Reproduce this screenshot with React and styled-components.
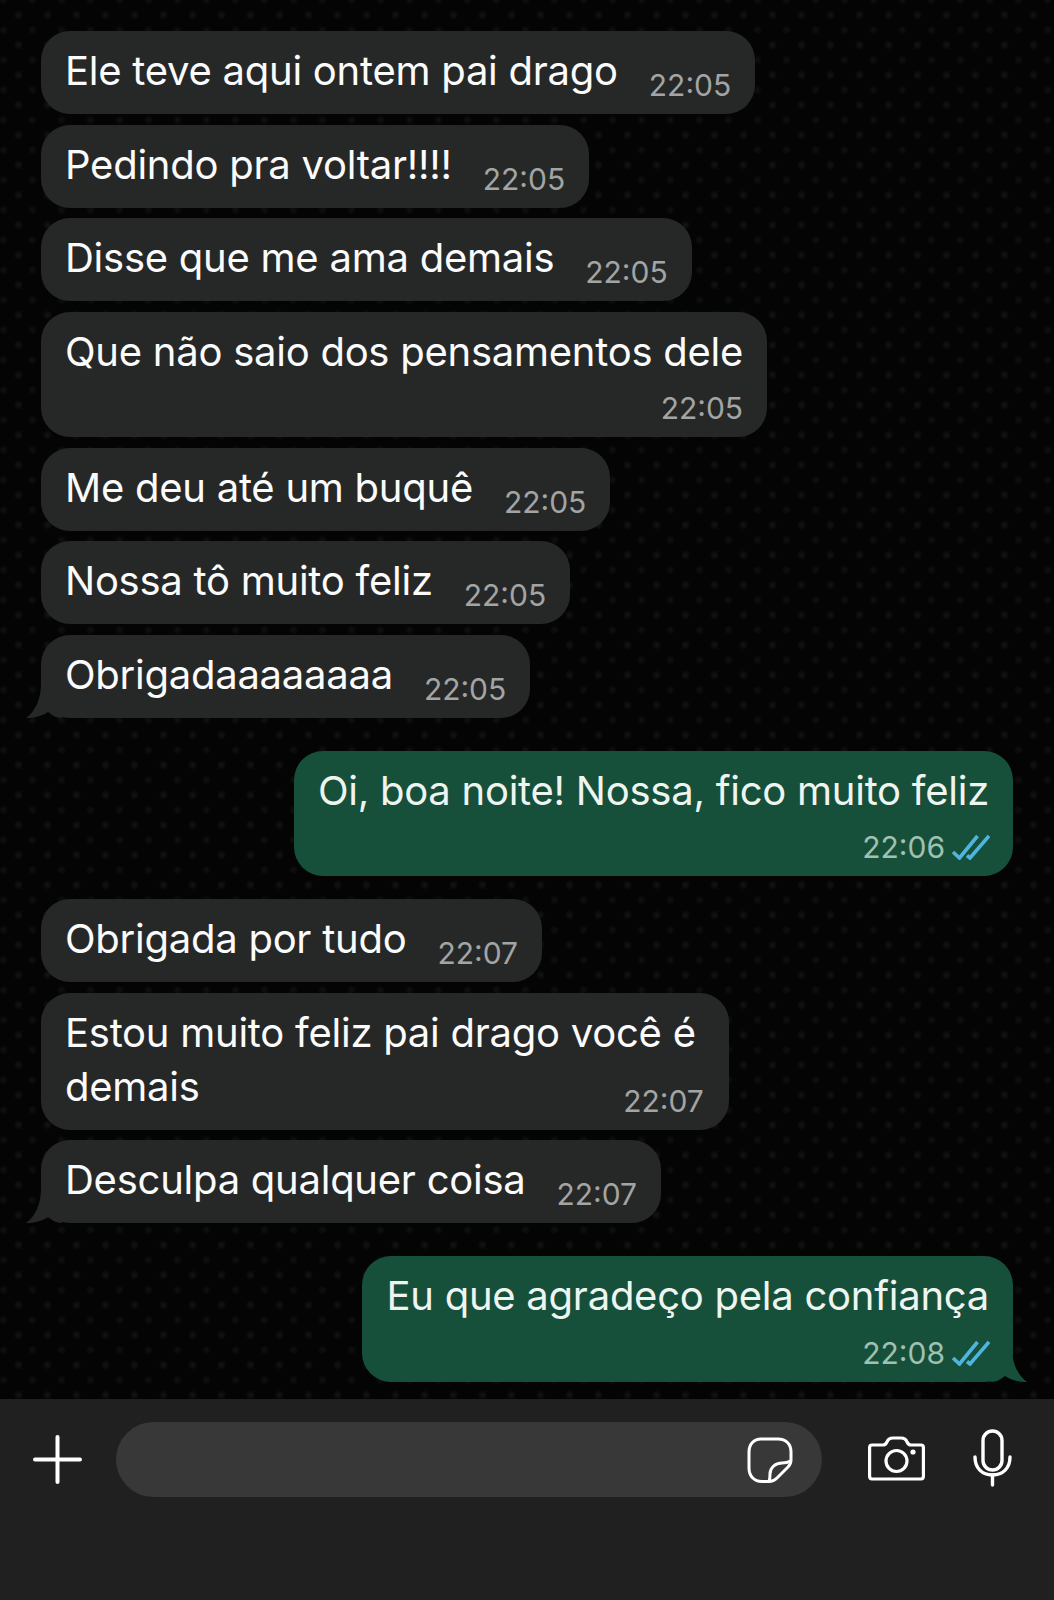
import styled, { createGlobalStyle } from "styled-components";
import React from "react";

const GlobalStyle = createGlobalStyle`
  html, body {
    margin: 0;
    padding: 0;
    background: #050505;
  }
  * {
    box-sizing: border-box;
  }
`;

const Screen = styled.div`
  width: 1054px;
  height: 1600px;
  display: flex;
  flex-direction: column;
  overflow: hidden;
  font-family: Inter, "Liberation Sans", sans-serif;
`;

const Thread = styled.div`
  flex: 1;
  display: flex;
  flex-direction: column;
  padding: 31px 41px 0;
  background-color: #040404;
  background-image:
    radial-gradient(circle, #151515 0, transparent 5px),
    radial-gradient(circle, #111111 0, transparent 5px);
  background-size: 29px 30px, 29px 30px;
  background-position: 4px 0, 18px 15px;
`;

const Group = styled.div`
  display: flex;
  flex-direction: column;
  align-items: ${(p) => (p.$sent ? "flex-end" : "flex-start")};
  gap: 10.5px;
  margin-top: ${(p) => p.$top || 0}px;
`;

const Bubble = styled.div`
  position: relative;
  display: flex;
  flex-direction: ${(p) => (p.$stacked || p.$wrapped ? "column" : "row")};
  align-items: flex-end;
  gap: ${(p) => (p.$wrapped ? 0 : p.$stacked ? 12.5 : 31)}px;
  padding: 13px ${(p) => (p.$wrapped ? 33 : 24)}px 12px 24px;
  border-radius: 29px;
  background: ${(p) => (p.$sent ? "#17503a" : "#262828")};
  color: ${(p) => (p.$sent ? "#eef5f1" : "#fbfbfb")};
`;

const Text = styled.div`
  align-self: flex-start;
  font-size: 40px;
  line-height: 54px;
  letter-spacing: -0.25px;
  white-space: nowrap;
  margin-bottom: ${(p) => (p.$inline ? 4 : 0)}px;
`;

const Meta = styled.div`
  display: flex;
  align-items: center;
  gap: 7px;
  height: 34px;
  margin-top: ${(p) => (p.$wrapped ? -30 : 0)}px;
  margin-right: ${(p) => (p.$wrapped ? -8 : 0)}px;
`;

const Time = styled.span`
  font-size: 30px;
  line-height: 34px;
  white-space: nowrap;
  color: ${(p) => (p.$sent ? "#9fc1b2" : "#a3a4a4")};
`;

const TailSvg = styled.svg`
  position: absolute;
  bottom: 0;
  ${(p) => (p.$sent ? "right: -14px; transform: scaleX(-1);" : "left: -15px;")}
`;

const TickSvg = styled.svg`
  margin-right: -1px;
`;

const InputBar = styled.div`
  height: 201px;
  display: flex;
  align-items: flex-start;
  padding: 23px 42px 0 33px;
  background: #202020;
`;

const IconSlot = styled.div`
  display: flex;
  flex: none;
  margin-left: ${(p) => p.$left || 0}px;
  margin-top: ${(p) => p.$top || 0}px;
`;

const Field = styled.div`
  flex: 1;
  height: 75px;
  margin-left: 34px;
  padding-right: 29px;
  display: flex;
  align-items: center;
  justify-content: flex-end;
  border-radius: 38px;
  background: #383838;
`;

const Tail = ({ sent, color }) => (
  <TailSvg $sent={sent} width="36" height="34" viewBox="0 0 36 34">
    <path
      d="M15 0 C15 15 9 28 0 34 C8 34 16 32 22 28 C26 31 30 34 36 34 L36 0 Z"
      fill={color}
    />
  </TailSvg>
);

const Ticks = () => (
  <TickSvg width="38" height="26" viewBox="0 0 38 26" fill="none" stroke="#4fb5df" strokeWidth="3.6">
    <path d="M1 18 L7.5 24 L25.5 2" />
    <path d="M15 21.5 L18 24 L37 2" />
  </TickSvg>
);

const PlusIcon = () => (
  <svg width="49" height="49" viewBox="0 0 49 49" stroke="#fff" strokeWidth="4" strokeLinecap="round">
    <path d="M24.5 2 V47" />
    <path d="M2 24.5 H47" />
  </svg>
);

const StickerIcon = () => (
  <svg width="46" height="46" viewBox="0 0 46 46" fill="none" stroke="#fff" strokeWidth="3" strokeLinejoin="round">
    <path d="M14 2 H31 C39 2 44 7 44 15 V23 C44 26 43 28 41 30 L30 41 C27.5 43.5 25 44.5 22 44.5 H15 C7 44.5 2 39 2 31 V15 C2 7 7 2 14 2 Z" />
    <path d="M43.5 24 C41 25.5 38 26 35 26 C28 26 23 31 23 37 C23 40 23 42 22 44.5" />
  </svg>
);

const CameraIcon = () => (
  <svg width="57" height="45" viewBox="0 0 57 45" fill="none" stroke="#fff" strokeWidth="3.2" strokeLinejoin="round">
    <path d="M4 9 H15 C17 9 18 8 19 6 C20 3 22 2 25 2 H33 C36 2 38 3 39 6 C40 8 41 9 43 9 H53 C54.5 9 55.4 10 55.4 11.5 V40 C55.4 42 54.5 43 53 43 H4 C2.5 43 1.6 42 1.6 40 V11.5 C1.6 10 2.5 9 4 9 Z" />
    <circle cx="28.5" cy="25" r="10.5" />
    <circle cx="45" cy="16" r="2.6" fill="#fff" stroke="none" />
  </svg>
);

const MicIcon = () => (
  <svg width="39" height="58" viewBox="0 0 39 58" fill="none" stroke="#fff" strokeWidth="3.4" strokeLinecap="round">
    <rect x="10" y="2" width="19" height="39" rx="9.5" />
    <path d="M2 28 C2 39 9 46 19.5 46 C30 46 37 39 37 28" />
    <path d="M19.5 46 V56" />
  </svg>
);

function Message({ text, time, sent, stacked, wrapped, tail }) {
  const bg = sent ? "#17503a" : "#262828";
  return (
    <Bubble $sent={sent} $stacked={stacked} $wrapped={wrapped}>
      <Text $inline={!stacked && !wrapped}>{text}</Text>
      <Meta $wrapped={wrapped}>
        <Time $sent={sent}>{time}</Time>
        {sent && <Ticks />}
      </Meta>
      {tail && <Tail sent={sent} color={bg} />}
    </Bubble>
  );
}

export default function App() {
  return (
    <Screen>
      <GlobalStyle />
      <Thread>
        <Group>
          <Message text="Ele teve aqui ontem pai drago" time="22:05" />
          <Message text="Pedindo pra voltar!!!!" time="22:05" />
          <Message text="Disse que me ama demais" time="22:05" />
          <Message text="Que não saio dos pensamentos dele" time="22:05" stacked />
          <Message text="Me deu até um buquê" time="22:05" />
          <Message text="Nossa tô muito feliz" time="22:05" />
          <Message text="Obrigadaaaaaaaa" time="22:05" tail />
        </Group>
        <Group $sent $top={33}>
          <Message text="Oi, boa noite! Nossa, fico muito feliz" time="22:06" sent stacked />
        </Group>
        <Group $top={23}>
          <Message text="Obrigada por tudo" time="22:07" />
          <Message
            text={<>Estou muito feliz pai drago você é<br />demais</>}
            time="22:07"
            wrapped
          />
          <Message text="Desculpa qualquer coisa" time="22:07" tail />
        </Group>
        <Group $sent $top={33}>
          <Message text="Eu que agradeço pela confiança" time="22:08" sent stacked tail />
        </Group>
      </Thread>
      <InputBar>
        <IconSlot $top={13}>
          <PlusIcon />
        </IconSlot>
        <Field>
          <StickerIcon />
        </Field>
        <IconSlot $left={46} $top={14}>
          <CameraIcon />
        </IconSlot>
        <IconSlot $left={48} $top={7}>
          <MicIcon />
        </IconSlot>
      </InputBar>
    </Screen>
  );
}
